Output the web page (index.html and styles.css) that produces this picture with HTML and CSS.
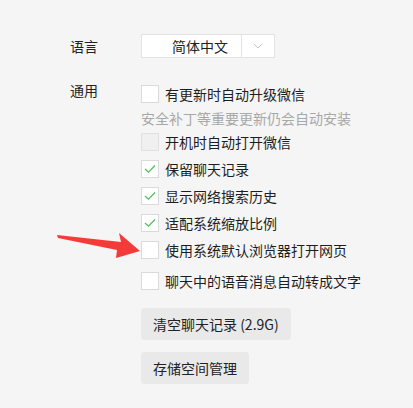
FILE: index.html
```html
<!DOCTYPE html>
<html lang="zh">
<head>
<meta charset="utf-8">
<link rel="stylesheet" href="styles.css">
</head>
<body>
<div class="page">
  <div class="row lang-row">
    <div class="label">语言</div>
    <div class="select">
      <span class="select-text">简体中文</span>
      <span class="select-arrow">
        <svg width="10" height="6" viewBox="0 0 10 6"><path d="M1 1 L5 5 L9 1" fill="none" stroke="#c4c4c4" stroke-width="1"/></svg>
      </span>
    </div>
  </div>
  <div class="row general-row">
    <div class="label label-general">通用</div>
    <div class="options">
      <label class="opt"><span class="box"></span><span>有更新时自动升级微信</span></label>
      <div class="hint">安全补丁等重要更新仍会自动安装</div>
      <label class="opt"><span class="box disabled"></span><span>开机时自动打开微信</span></label>
      <label class="opt"><span class="box checked"><svg width="12" height="10" viewBox="0 0 12 10"><path d="M1 5 L4.5 8.2 L11 1.5" fill="none" stroke="#4fc15a" stroke-width="1.3"/></svg></span><span>保留聊天记录</span></label>
      <label class="opt"><span class="box checked"><svg width="12" height="10" viewBox="0 0 12 10"><path d="M1 5 L4.5 8.2 L11 1.5" fill="none" stroke="#4fc15a" stroke-width="1.3"/></svg></span><span>显示网络搜索历史</span></label>
      <label class="opt"><span class="box checked"><svg width="12" height="10" viewBox="0 0 12 10"><path d="M1 5 L4.5 8.2 L11 1.5" fill="none" stroke="#4fc15a" stroke-width="1.3"/></svg></span><span>适配系统缩放比例</span></label>
      <label class="opt"><span class="box"></span><span>使用系统默认浏览器打开网页</span></label>
      <label class="opt opt-last"><span class="box"></span><span>聊天中的语音消息自动转成文字</span></label>
      <button class="btn btn-first">清空聊天记录 (2.9G)</button>
      <button class="btn">存储空间管理</button>
    </div>
  </div>
  <svg class="arrow" width="90" height="30" viewBox="0 0 90 30">
    <polygon points="0,5 64,12 62,3 83,21 59,28 60,20 1,8" fill="#f53a3a"/>
  </svg>
</div>
</body>
</html>
```
FILE: styles.css
```css
html, body {
  margin: 0;
  padding: 0;
  background: #f5f5f5;
}
body {
  font-family: "Noto Sans CJK SC", "Microsoft YaHei", sans-serif;
  font-size: 14px;
  color: #1e1e1e;
  width: 413px;
  height: 408px;
  overflow: hidden;
}
.page {
  position: relative;
  padding: 34px 0 0 70px;
}
.row {
  display: flex;
}
.label {
  width: 71px;
  flex: none;
  font-size: 14px;
  line-height: 24px;
  color: #222;
}
.general-row {
  margin-top: 27px;
}
.label-general {
  line-height: 18px;
  margin-top: -4px;
}
.select {
  display: flex;
  width: 134px;
  height: 24px;
  box-sizing: border-box;
  border: 1px solid #e3e3e3;
  background: #fff;
}
.select-text {
  width: 100px;
  box-sizing: border-box;
  padding-left: 30px;
  line-height: 22px;
  border-right: 1px solid #e3e3e3;
  color: #222;
}
.select-arrow {
  flex: 1;
  display: flex;
  align-items: center;
  justify-content: center;
}
.options {
  display: flex;
  flex-direction: column;
  align-items: flex-start;
}
.opt {
  display: flex;
  align-items: center;
  gap: 6px;
  height: 18px;
  line-height: 18px;
  margin-bottom: 9px;
  white-space: nowrap;
}
.box {
  width: 18px;
  height: 18px;
  box-sizing: border-box;
  border: 1px solid #dadada;
  background: #fff;
  display: flex;
  align-items: center;
  justify-content: center;
}
.box.disabled {
  background: #f0f0f0;
  border-color: #e0e0e0;
}
.hint {
  color: #a8a8a8;
  line-height: 20px;
  margin: -4px 0 5px;
  white-space: nowrap;
}
.opt-last {
  margin-top: 4px;
  margin-bottom: 0;
}
.btn {
  font-family: inherit;
  font-size: 14px;
  color: #222;
  background: #e9e9e9;
  border: none;
  border-radius: 3px;
  height: 32px;
  padding: 0 12px;
  margin-top: 12px;
  cursor: pointer;
}
.btn-first {
  margin-top: 18px;
}
.arrow {
  position: absolute;
  left: 57px;
  top: 230px;
}
```
